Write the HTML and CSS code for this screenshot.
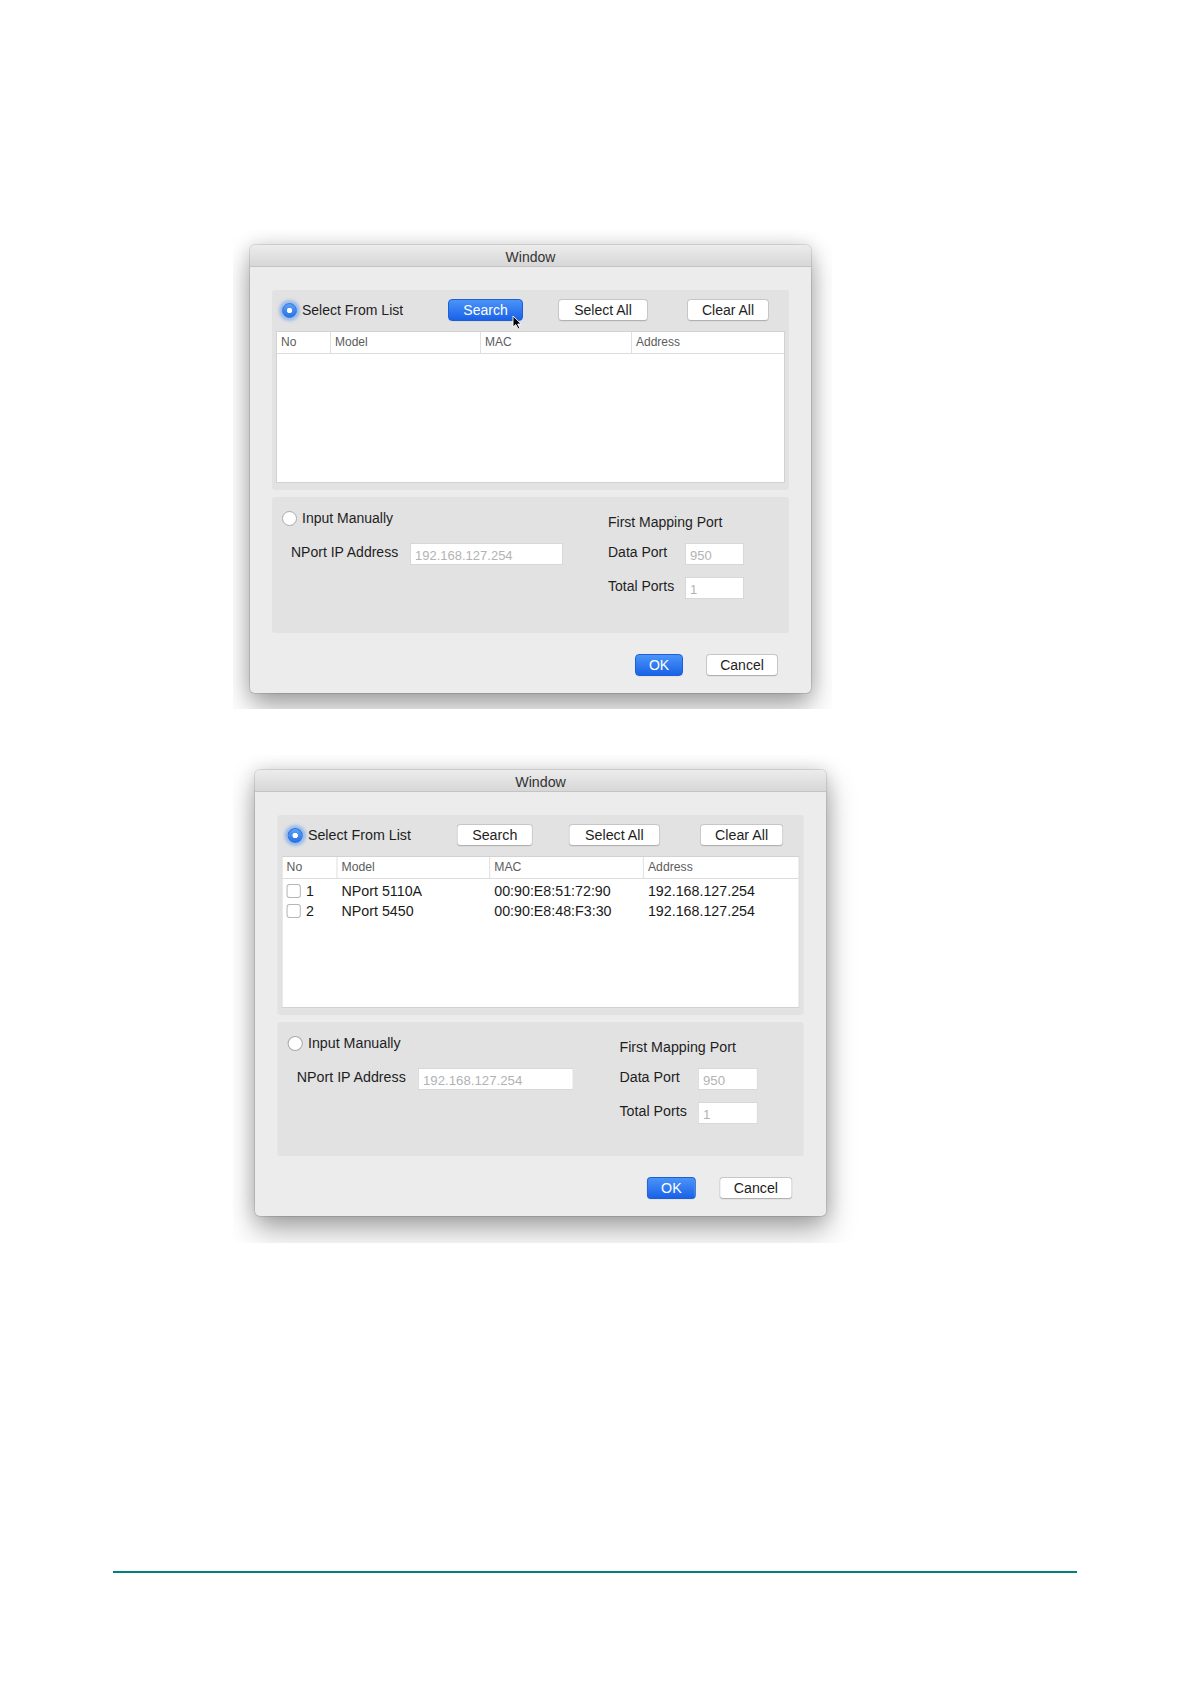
FILE: index.html
```html
<!DOCTYPE html>
<html lang="en">
<head>
  <meta charset="UTF-8">
  <title>Window</title>
  <link rel="stylesheet" href="styles.css">
</head>
<body>
  <div class="shot shot-first">
    <div class="window">
      <div class="titlebar">Window</div>
      <div class="group list-group">
        <div class="top-row">
          <label class="radio-label"><span class="radio checked"></span>Select From List</label>
          <button class="btn btn-blue btn-search">Search
            <svg class="cursor" viewBox="0 0 10 15" width="10" height="15"><path d="M1 1 L1 12 L3.8 9.6 L6.2 14 L7.9 13.2 L5.7 9 L9.2 9 Z" fill="#000" stroke="#fff" stroke-width="0.9"/></svg>
          </button>
          <button class="btn btn-selall">Select All</button>
          <button class="btn btn-clear">Clear All</button>
        </div>
        <div class="table">
          <div class="thead">
            <div class="th c-no">No</div>
            <div class="th c-model">Model</div>
            <div class="th c-mac">MAC</div>
            <div class="th c-addr">Address</div>
          </div>
          <div class="tbody"></div>
        </div>
      </div>
      <div class="group manual-group">
        <div class="manual-left">
          <label class="radio-label radio-row"><span class="radio"></span>Input Manually</label>
          <div class="ip-row">
            <span class="ip-label">NPort IP Address</span>
            <div class="field field-ip">192.168.127.254</div>
          </div>
        </div>
        <div class="manual-right">
          <div class="map-title">First Mapping Port</div>
          <div class="port-row">
            <span class="port-label">Data Port</span>
            <div class="field field-port">950</div>
          </div>
          <div class="port-row">
            <span class="port-label">Total Ports</span>
            <div class="field field-port">1</div>
          </div>
        </div>
      </div>
      <div class="actions">
        <button class="btn btn-blue btn-ok">OK</button>
        <button class="btn btn-cancel">Cancel</button>
      </div>
    </div>
  </div>

  <div class="shot shot-second">
    <div class="window">
      <div class="titlebar">Window</div>
      <div class="group list-group">
        <div class="top-row">
          <label class="radio-label"><span class="radio checked"></span>Select From List</label>
          <button class="btn btn-search">Search</button>
          <button class="btn btn-selall">Select All</button>
          <button class="btn btn-clear">Clear All</button>
        </div>
        <div class="table">
          <div class="thead">
            <div class="th c-no">No</div>
            <div class="th c-model">Model</div>
            <div class="th c-mac">MAC</div>
            <div class="th c-addr">Address</div>
          </div>
          <div class="tbody">
            <div class="tr">
              <div class="td c-no"><span class="check"></span>1</div>
              <div class="td c-model">NPort 5110A</div>
              <div class="td c-mac">00:90:E8:51:72:90</div>
              <div class="td c-addr">192.168.127.254</div>
            </div>
            <div class="tr">
              <div class="td c-no"><span class="check"></span>2</div>
              <div class="td c-model">NPort 5450</div>
              <div class="td c-mac">00:90:E8:48:F3:30</div>
              <div class="td c-addr">192.168.127.254</div>
            </div>
          </div>
        </div>
      </div>
      <div class="group manual-group">
        <div class="manual-left">
          <label class="radio-label radio-row"><span class="radio"></span>Input Manually</label>
          <div class="ip-row">
            <span class="ip-label">NPort IP Address</span>
            <div class="field field-ip">192.168.127.254</div>
          </div>
        </div>
        <div class="manual-right">
          <div class="map-title">First Mapping Port</div>
          <div class="port-row">
            <span class="port-label">Data Port</span>
            <div class="field field-port">950</div>
          </div>
          <div class="port-row">
            <span class="port-label">Total Ports</span>
            <div class="field field-port">1</div>
          </div>
        </div>
      </div>
      <div class="actions">
        <button class="btn btn-blue btn-ok">OK</button>
        <button class="btn btn-cancel">Cancel</button>
      </div>
    </div>
  </div>

  <div class="rule"></div>
</body>
</html>
```

FILE: styles.css
```css
body { margin: 0; background: #fff; color: #1e1e1e; font-family: "Liberation Sans", Arial, sans-serif; }

.shot { overflow: hidden; background: #fff; margin-left: 233px; box-sizing: border-box; }
.shot-first { width: 599px; height: 481px; margin-top: 228px; padding: 17px 0 0 17px; }
.shot-second { width: 629px; height: 488px; margin-top: 46px; padding: 15px 0 0 22px; }

.window { width: 561px; height: 448px; background: #ececec; border-radius: 5px; display: flex; flex-direction: column;
  box-shadow: 0 0 0 1px rgba(0,0,0,0.1), 0 14px 28px rgba(0,0,0,0.34), 0 0 18px rgba(0,0,0,0.14); }
.shot-second .window { height: 446px; transform: scaleX(1.018); transform-origin: 0 0; }
.shot-second .manual-group { height: 134px; }

.titlebar { height: 22px; padding-top: 3px; line-height: 19px; box-sizing: border-box; flex: none; text-align: center;
  font-size: 14px; color: #333; background: linear-gradient(#ececec, #d7d7d7); border-bottom: 1px solid #c4c4c4;
  border-radius: 5px 5px 0 0; }

.group { margin: 0 22px; background: #e2e2e2; border-radius: 3px; box-sizing: border-box; flex: none; }
.list-group { margin-top: 23px; height: 200px; padding: 9px 4px 0; }

.top-row { display: flex; align-items: center; height: 22px; }
.radio-label { display: flex; align-items: center; font-size: 14px; box-sizing: border-box; }
.top-row .radio-label { width: 172px; padding-left: 6px; }
.radio { width: 15px; height: 15px; flex: none; margin-right: 5px; border-radius: 50%; box-sizing: border-box;
  background: #fff; border: 1px solid #a9a9a9; }
.radio.checked { border-color: #2a6fdc;
  background: radial-gradient(circle, #fff 0 2.4px, transparent 3px), linear-gradient(#5ca2fa, #2872ea);
  box-shadow: 0 0 3px 3px rgba(80,150,245,0.5); }

.btn { height: 22px; padding: 0; font-family: inherit; font-size: 14px; color: #1e1e1e; background: #fff;
  border: 1px solid #c6c6c6; border-bottom-color: #b2b2b2; border-radius: 4px; box-shadow: 0 1px 0 rgba(0,0,0,0.04); }
.btn-blue { color: #fff; background: linear-gradient(#4a94f8, #1a62e7); border-color: #1d5fd6; }
.btn-search { width: 75px; position: relative; }
.btn-selall { width: 90px; margin-left: 35px; }
.btn-clear { width: 82px; margin-left: 39px; }
.cursor { position: absolute; left: 63px; top: 15px; }

.table { margin-top: 10px; height: 152px; background: #fff; border: 1px solid #d2d2d2; box-sizing: border-box; }
.thead { display: flex; height: 22px; border-bottom: 1px solid #dcdcdc; box-sizing: border-box; }
.th { font-size: 12px; line-height: 21px; color: #5c5c5c; padding-left: 4px; box-sizing: border-box; }
.c-no { width: 53px; }
.c-model { width: 150px; border-left: 1px solid #e0e0e0; }
.c-mac { width: 151px; border-left: 1px solid #e0e0e0; }
.c-addr { flex: 1; border-left: 1px solid #e0e0e0; }
.tbody { padding-top: 2px; }
.tr { display: flex; height: 20px; align-items: center; font-size: 14px; color: #1a1a1a; }
.td { padding-left: 4px; box-sizing: border-box; border-left-color: transparent; }
.td.c-no { display: flex; align-items: center; }
.check { width: 14px; height: 14px; margin-right: 5px; box-sizing: border-box; background: #fff;
  border: 1px solid #b6b6b6; border-radius: 3px; }

.manual-group { margin-top: 7px; height: 136px; display: flex; padding: 12px 0 0 10px; font-size: 14px; }
.manual-left { width: 326px; }
.radio-row { height: 18px; }
.ip-row { display: flex; align-items: center; margin-top: 16px; }
.ip-label { width: 128px; padding: 0 0 4px 9px; box-sizing: border-box; }
.manual-right { padding-top: 4px; }
.map-title { height: 18px; line-height: 18px; }
.port-row { display: flex; align-items: center; margin-top: 12px; }
.port-label { width: 77px; padding-bottom: 4px; }
.field { height: 22px; line-height: 23px; padding-left: 4px; box-sizing: border-box; background: #fff;
  border: 1px solid #d8d8d8; font-size: 13px; color: #b3b3b3; }
.field-ip { width: 153px; }
.field-port { width: 59px; }

.actions { display: flex; justify-content: flex-end; gap: 23px; margin-top: 21px; padding-right: 33px; }
.btn-ok { width: 48px; }
.btn-cancel { width: 72px; }

.rule { width: 964px; height: 2px; margin: 328px 0 0 113px; background: #00807b; }
```
